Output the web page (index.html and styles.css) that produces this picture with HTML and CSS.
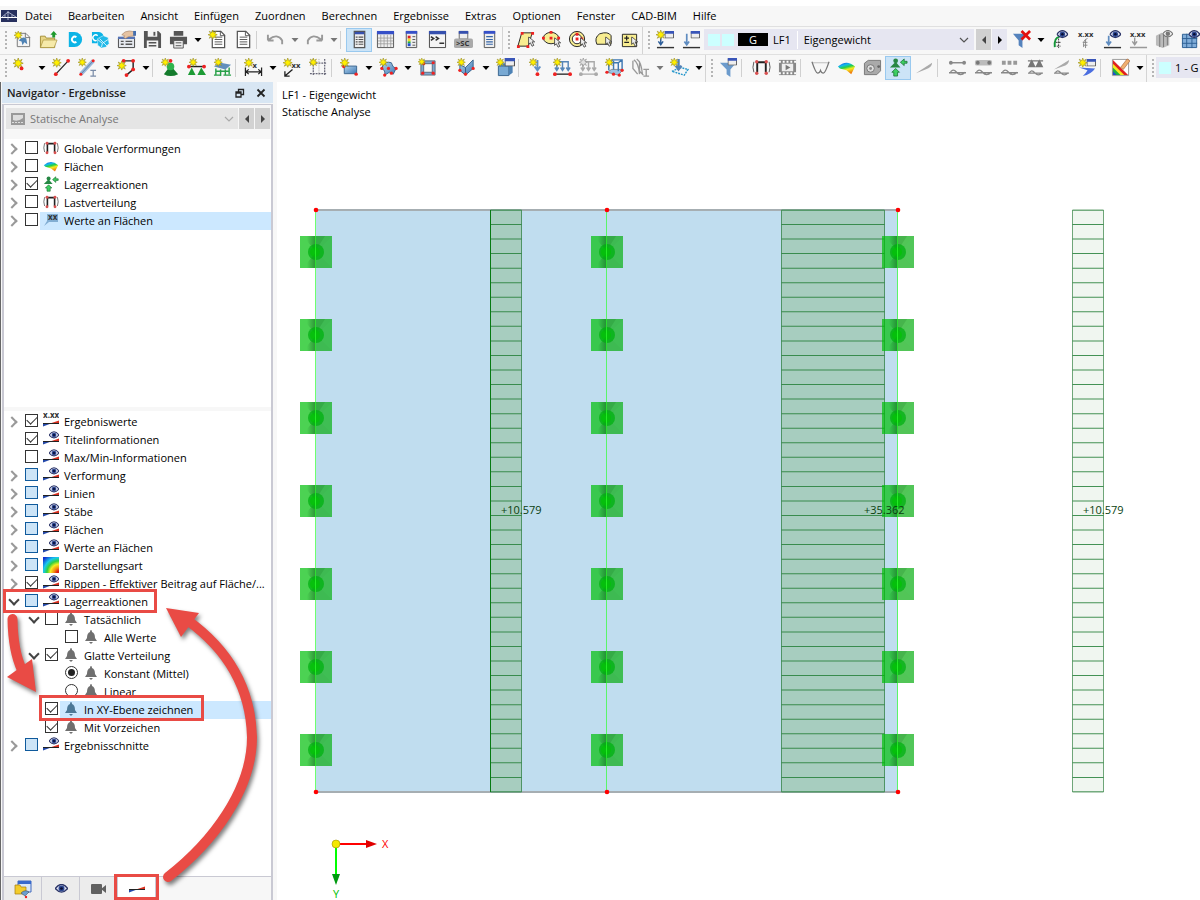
FILE: index.html
```html
<!DOCTYPE html>
<html lang="de">
<head>
<meta charset="utf-8">
<title>Navigator - Ergebnisse</title>
<link rel="stylesheet" href="styles.css">
</head>
<body>
<svg class="defs" aria-hidden="true">
<defs>
<linearGradient id="rain" x1="0" y1="0" x2="0.4" y2="1"><stop offset="0" stop-color="#1538d8"/><stop offset=".3" stop-color="#12b8ee"/><stop offset=".5" stop-color="#25cf45"/><stop offset=".7" stop-color="#f4ec20"/><stop offset="1" stop-color="#f08010"/></linearGradient>
<linearGradient id="blue" x1="0" y1="0" x2="1" y2="1"><stop offset="0" stop-color="#b5d4ec"/><stop offset="1" stop-color="#3c78b4"/></linearGradient>
<linearGradient id="shadeL" x1="0" y1="0" x2="1" y2="0"><stop offset=".3" stop-color="#044010" stop-opacity="0"/><stop offset="1" stop-color="#044010" stop-opacity=".45"/></linearGradient>
<radialGradient id="contour" cx="1" cy="1" r="1.3"><stop offset=".1" stop-color="#e02010"/><stop offset=".25" stop-color="#f49010"/><stop offset=".42" stop-color="#f4ee20"/><stop offset=".58" stop-color="#30d040"/><stop offset=".75" stop-color="#18c8f0"/><stop offset="1" stop-color="#1030d0"/></radialGradient>
<symbol id="star" viewBox="0 0 10 10"><path d="M5 0l1 2.8L8.700 1.300 7.200 4 10 5 7.200 6l1.500 2.700L6 7.200 5 10 4 7.200 1.300 8.700 2.800 6 0 5l2.800-1L1.300 1.300 4 2.800z" fill="#ffef00" stroke="#8f8420" stroke-width=".6"/></symbol>
<symbol id="eye" viewBox="0 0 14 10"><path d="M0 5Q7-4 14 5 7 13 0 5z" fill="#dfe3f3" stroke="#2c3568" stroke-width="1.500"/><circle cx="7" cy="5" r="3.300" fill="#2c4690"/><circle cx="7" cy="5" r="1.500" fill="#080c30"/></symbol>
<symbol id="geye" viewBox="0 0 14 10"><path d="M0 5Q7-4 14 5 7 13 0 5z" fill="#eee" stroke="#777" stroke-width="1.500"/><circle cx="7" cy="5" r="3" fill="#777"/></symbol>
<symbol id="win" viewBox="0 0 10 8"><path d="M.5.5h9v7h-9z" fill="#eee" stroke="#555"/><path d="M0 0h10v3H0z" fill="#3955b8"/></symbol>
<symbol id="cursor" viewBox="0 0 8 12"><path d="M1 0v9l2-2 2 4 2-1-2-4h3z" fill="#eee" stroke="#333" stroke-width=".9"/></symbol>
<symbol id="wave" viewBox="0 0 18 8"><path d="M1 5q3-6 7-1t9 0M0 4.500h18" fill="none" stroke="#888" stroke-width="1.400"/></symbol>
<symbol id="wedges" viewBox="0 0 16 6"><path d="M0 3h8L0 6z" fill="#2348a8"/><path d="M7 3L16 0v3z" fill="#d83020"/><path d="M0 3h16" stroke="#222"/></symbol>

<symbol id="new" viewBox="0 0 20 20"><path d="M4.500 3.500h9l4 4v10h-13z" fill="#f4f4f4" stroke="#777"/><path d="M13 3v5h5" fill="none" stroke="#777"/><path d="M6 11q4-5 8-2l1 6-3-2-2 3-1-4z" fill="#4f83b5"/><use href="#star" x="1" y="1" width="9" height="9"/></symbol>
<symbol id="open" viewBox="0 0 20 20"><path d="M1.500 18.500v-12h5l1 2h9v10z" fill="#e8d585" stroke="#a48f38"/><path d="M1.500 18.500l3-8H19l-3 8z" fill="#f6eaa9" stroke="#a48f38" stroke-width=".7"/><path d="M14 8V5h-2l3.500-4L19 5h-2v3z" fill="#1d9a2c"/></symbol>
<symbol id="dcube" viewBox="0 0 20 20"><path d="M4 2h6a8 8 0 010 16H4z" fill="#0cb4e6"/><path d="M12 7.500a3 3 0 100 5" fill="none" stroke="#fff" stroke-width="2"/></symbol>
<symbol id="dnet" viewBox="0 0 20 20"><path d="M1 2h7a6 6 0 014 10l-4 2H1z" fill="#0cb4e6"/><path d="M13 6l5 2 1 6-3 4-5 1-4-3V9z" fill="#20b9e8" stroke="#fff" stroke-width=".5"/><path d="M7 10l5 4 6-4M12 14l-1 4M9 9l8 8" stroke="#fff" fill="none" stroke-width=".8"/><path d="M7 6a3 3 0 10-1 5" fill="none" stroke="#fff" stroke-width="1.500"/></symbol>
<symbol id="props" viewBox="0 0 20 20"><path d="M1.500 8.500h17v10h-17z" fill="#e5e8ee" stroke="#444"/><path d="M1 7h18v2.500H1z" fill="#5674b5"/><path d="M4 12h3M4 15h3M9 12h7M9 15h7" stroke="#555" stroke-width="1.500"/><path d="M5 5q3-4 8-4l6 1v4l-7 1-3 2-2-1 1-2z" fill="#e6c3a2" stroke="#9b7a60" stroke-width=".6"/><path d="M17 1h3v5h-3z" fill="#446eae"/></symbol>
<symbol id="save" viewBox="0 0 20 20"><path d="M1 1h15l3 3v15H1z" fill="#555"/><path d="M5 1h10v6H5zM4 11h12v8H4z" fill="#f4f4f4"/><path d="M11 2h2v4h-2z" fill="#555"/><path d="M6 13.500h8M6 16.500h8" stroke="#555" stroke-width="1.500"/></symbol>
<symbol id="print" viewBox="0 0 20 20"><path d="M5 1h10v5H5zM1 7h18v8H1z" fill="#555"/><path d="M5 11h10v8H5z" fill="#eee" stroke="#555"/><path d="M7 13.500h6M7 16.500h6" stroke="#555"/></symbol>
<symbol id="doc" viewBox="0 0 20 20"><path d="M3.500 1.500h9l4 4v13h-13z" fill="#fff" stroke="#555" stroke-width="1.300"/><path d="M12 1v5h5" fill="none" stroke="#555"/><path d="M6 7.500h8M6 10h8M6 12.500h8M6 15h8" stroke="#555"/></symbol>
<symbol id="docnew" viewBox="0 0 20 20"><use href="#doc" x="1"/><use href="#star" width="10" height="10"/></symbol>
<symbol id="undo" viewBox="0 0 20 20"><path d="M2 11h6M2 11V5M3 10q9-7 14 1v4" fill="none" stroke="#999" stroke-width="2"/></symbol>
<symbol id="redo" viewBox="0 0 20 20"><path d="M18 11h-6M18 11V5M17 10Q8 3 3 11v4" fill="none" stroke="#999" stroke-width="2"/></symbol>
<symbol id="panel" viewBox="0 0 20 20"><path d="M4.500 1.500h11v17h-11z" fill="#eee" stroke="#555" stroke-width="1.300"/><path d="M5 2h10v2.500H5z" fill="#3650ae"/><path d="M6 7.500h2M6 10h2M6 12.500h2M6 15h2M9 7.500h5M9 10h5M9 12.500h5M9 15h5" stroke="#555" stroke-width="1.300"/></symbol>
<symbol id="tablei" viewBox="0 0 20 20"><path d="M1.500 2.500h17v16h-17z" fill="#eee" stroke="#555"/><path d="M1 1h18v3.500H1z" fill="#3650c8"/><path d="M2 8.500h16M2 11.500h16M2 14.500h16M5 5v13M8.500 5v13M12 5v13M15.500 5v13" stroke="#999" stroke-width=".8"/></symbol>
<symbol id="legend" viewBox="0 0 20 20"><path d="M4.500 1.500h11v17h-11z" fill="#eee" stroke="#555"/><path d="M4 1h12v3H4z" fill="#3650c8"/><path d="M6 6h3v3H6z" fill="#e02020"/><path d="M6 9h3v3H6z" fill="#eedd20"/><path d="M6 12h3v2H6z" fill="#20b040"/><path d="M6 14h3v3H6z" fill="#2050d0"/><path d="M11 7h3M11 10h3M11 13h3M11 16h3" stroke="#555"/></symbol>
<symbol id="console" viewBox="0 0 20 20"><path d="M1.500 1.500h17v17h-17z" fill="#f4f4f4" stroke="#444"/><path d="M1 1h18v3.500H1z" fill="#3650ae"/><path d="M3 7l3 2-3 2M8 7l3 2-3 2M12 14h5" fill="none" stroke="#333" stroke-width="1.600"/></symbol>
<symbol id="script" viewBox="0 0 20 20"><path d="M5.500 1.500h9v8h-9z" fill="#eee" stroke="#666"/><path d="M5 1h10v3H5z" fill="#3650ae"/><rect y="9" width="20" height="10" rx="2" fill="#aaa"/><text x="2" y="17" class="tiny">&gt;SC</text></symbol>
<symbol id="lines" viewBox="0 0 20 20"><path d="M4.500 1.500h11v17h-11z" fill="#eee" stroke="#555"/><path d="M4 1h12v3H4z" fill="#3650c8"/><path d="M6.500 7h7M6.500 10h7M6.500 12.500h7M6.500 15h7" stroke="#3565a8" stroke-width="1.300"/></symbol>
<symbol id="selpara" viewBox="0 0 20 20"><path d="M6 3h11l-4 14H2z" fill="#f8ed91" stroke="#222"/><path d="M5 2h3v3H5zM16 2h3v3h-3zM1 16h3v3H1zM11 16h3v3h-3z" fill="#e22"/><use href="#cursor" x="12" y="7" width="8" height="11"/></symbol>
<symbol id="selell" viewBox="0 0 20 20"><ellipse cx="9.500" cy="8.500" rx="8" ry="6" fill="#f8ed91" stroke="#222"/><path d="M8 1h3v3H8zM0 7h3v3H0zM16 7h3v3h-3zM8 7h3v3H8z" fill="#e22"/><use href="#cursor" x="12" y="8" width="8" height="11"/></symbol>
<symbol id="selring" viewBox="0 0 20 20"><circle cx="9.500" cy="9.500" r="8" fill="#f8ed91" stroke="#222"/><circle cx="9.500" cy="9.500" r="5" fill="#fff" stroke="#222"/><path d="M8 8h3v3H8zM13 8h3v3h-3zM8 3h3v3H8z" fill="#e22"/><use href="#cursor" x="12" y="8" width="8" height="11"/></symbol>
<symbol id="sellas" viewBox="0 0 20 20"><path d="M3 15Q0 8 6 4q9-3 12 2v9z" fill="#f8ed91" stroke="#222"/><use href="#cursor" x="11" y="7" width="8" height="11"/></symbol>
<symbol id="selpm" viewBox="0 0 20 20"><path d="M2.500 4.500h15v13h-15z" fill="#f8ed91" stroke="#222"/><path d="M4.500 8.500h5M7 6v5M4.500 13h5" stroke="#222" stroke-width="1.300"/><use href="#cursor" x="11" y="7" width="8" height="11"/></symbol>
<symbol id="lcnew" viewBox="0 0 20 20"><path d="M1 18.500h18" stroke="#333" stroke-width="1.500"/><path d="M5 7v8M2.500 12L5 15.500 7.500 12" fill="none" stroke="#2b5c98" stroke-width="1.500"/><use href="#star" x="0" y="0" width="10" height="10"/><use href="#win" x="9" y="1" width="10" height="8"/></symbol>
<symbol id="lcedit" viewBox="0 0 20 20"><path d="M1 18.500h18" stroke="#333" stroke-width="1.500"/><path d="M5 4v11M2.500 12L5 15.500 7.500 12" fill="none" stroke="#5f8cc0" stroke-width="1.800"/><use href="#win" x="9" y="1" width="10" height="8"/></symbol>
<symbol id="filterx" viewBox="0 0 20 20"><path d="M1 4h15l-5 7v8l-4-3v-5z" fill="#5583bd"/><path d="M10 1l9 9M19 1l-9 9" stroke="#e30f0f" stroke-width="2.800"/></symbol>
<symbol id="supeye" viewBox="0 0 20 20"><path d="M9 7q-6 1-5 11" fill="none" stroke="#149638" stroke-width="2"/><path d="M8 9v10M5 13h5M6 17h4" stroke="#333" stroke-dasharray="2 1"/><use href="#eye" x="6" y="0" width="12" height="9"/></symbol>
<symbol id="xxx" viewBox="0 0 20 20"><text x="1" y="7" class="tiny">x.xx</text><path d="M11 9q-5 1-4 9M9 10v9M6 13h5M7 16h4" fill="none" stroke="#888"/></symbol>
<symbol id="loadeye" viewBox="0 0 20 20"><path d="M1 18.500h18" stroke="#333" stroke-width="1.500"/><path d="M6 6v9M3.500 12L6 15.500 8.500 12" fill="none" stroke="#5f8cc0" stroke-width="1.800"/><use href="#eye" x="7" y="0" width="12" height="9"/></symbol>
<symbol id="loadxx" viewBox="0 0 20 20"><text x="1" y="7" class="tiny">x.xx</text><path d="M1 18.500h18M6 8v7M3.500 12L6 15.500 8.500 12" fill="none" stroke="#999" stroke-width="1.500"/></symbol>
<symbol id="cubeeye" viewBox="0 0 20 20"><path d="M1 6l6-3 8 3v10l-7 3-7-3z" fill="#bbb"/><path d="M5 5v13M9 5v13M13 6v10" stroke="#777"/><use href="#geye" x="8" y="0" width="11" height="8"/></symbol>
<symbol id="mesheye" viewBox="0 0 20 20"><path d="M1.500 4.500h15v14h-15zM1 9h16M1 14h16M6 4v15M11.500 4v15" fill="#80acd8" stroke="#2c5f94"/><use href="#eye" x="8" y="0" width="12" height="9"/></symbol>

<symbol id="node" viewBox="0 0 20 20"><use href="#star" width="11" height="11"/><circle cx="9" cy="11" r="2" fill="#e22"/></symbol>
<symbol id="line" viewBox="0 0 20 20"><path d="M4 17L17 3" stroke="#222" stroke-width="1.300"/><circle cx="4" cy="17" r="2" fill="#e22"/><circle cx="17" cy="3" r="2" fill="#e22"/><use href="#star" width="10" height="10"/></symbol>
<symbol id="member" viewBox="0 0 20 20"><path d="M3 17L16 3" stroke="#9ab7d9" stroke-width="4"/><path d="M3 17L16 3" stroke="#5f82a9"/><circle cx="3" cy="17" r="1.600" fill="#e22"/><circle cx="16" cy="3" r="1.600" fill="#e22"/><path d="M13 13h6M16 13v6M13 19h6" stroke="#7a8ca8" stroke-width="1.300"/><use href="#star" width="9" height="9"/></symbol>
<symbol id="poly" viewBox="0 0 20 20"><path d="M6 3h11v9l-7 6" fill="none" stroke="#222" stroke-width="1.500"/><circle cx="7" cy="3" r="2" fill="#e22"/><circle cx="17" cy="3" r="2" fill="#e22"/><circle cx="17" cy="12" r="2" fill="#e22"/><circle cx="10" cy="18" r="2" fill="#e22"/><use href="#star" x="0" y="3" width="10" height="10"/></symbol>
<symbol id="support" viewBox="0 0 20 20"><path d="M10 8l8 9q-8 4-15 0z" fill="#147b2c"/><circle cx="10" cy="9" r="4" fill="#2fb34c"/><circle cx="10" cy="3" r="2" fill="#e22"/><use href="#star" width="9" height="9"/></symbol>
<symbol id="linesup" viewBox="0 0 20 20"><path d="M2 9h16" stroke="#222" stroke-width="1.500"/><path d="M5 10l4 8H1zM15 10l5 8h-9z" fill="#1d9b35"/><circle cx="2" cy="9" r="2" fill="#e22"/><circle cx="18" cy="9" r="2" fill="#e22"/><use href="#star" x="2" y="0" width="9" height="9"/></symbol>
<symbol id="surfsup" viewBox="0 0 20 20"><path d="M1 9l7-4 11 2-6 5z" fill="#628fbd"/><path d="M3 11v7M8 12v7M13 12v6M17 10v7M1 18h7M11 18h8M3 14h14" stroke="#28a048" stroke-width="1.500"/><use href="#star" x="1" y="0" width="9" height="9"/></symbol>
<symbol id="dim" viewBox="0 0 20 20"><path d="M1.500 10v9M18.500 10v9M2 14.500h16M5 12l-3 2.500L5 17M15 12l3 2.500-3 2.500" fill="none" stroke="#222" stroke-width="1.300"/><text x="9" y="10" class="tiny">x</text><use href="#star" width="10" height="10"/></symbol>
<symbol id="dimxx" viewBox="0 0 20 20"><path d="M10 12l-8 7M2 14v5h5" fill="none" stroke="#222" stroke-width="1.400"/><text x="9" y="11" class="tiny">xx</text><use href="#star" width="10" height="10"/></symbol>
<symbol id="grid" viewBox="0 0 20 20"><path d="M4.500 1v18M16.500 1v18M1 5.500h18M1 16.500h18" fill="none" stroke="#667" stroke-width="1.300" stroke-dasharray="2 1"/><path d="M10.500 1v18" stroke="#aaa" stroke-dasharray="1 1"/><use href="#star" width="9" height="9"/></symbol>
<symbol id="surf" viewBox="0 0 20 20"><path d="M4.500 8.500h13v8h-13z" fill="url(#blue)" stroke="#39648e"/><circle cx="4" cy="9" r="1.800" fill="#e22"/><circle cx="17" cy="17" r="1.800" fill="#e22"/><use href="#star" width="10" height="10"/></symbol>
<symbol id="surfc" viewBox="0 0 20 20"><path d="M4 8q3-5 9-3 1 5 5 6l-3 6-4-2-5 3q1-5-3-7z" fill="url(#blue)" stroke="#39648e"/><circle cx="3" cy="11" r="1.700" fill="#e22"/><circle cx="10" cy="11" r="1.700" fill="#e22"/><circle cx="18" cy="11" r="1.700" fill="#e22"/><circle cx="6" cy="18" r="1.700" fill="#e22"/><circle cx="13" cy="16" r="1.700" fill="#e22"/><use href="#star" width="9" height="9"/></symbol>
<symbol id="opening" viewBox="0 0 20 20"><path d="M3 3h15v15H3zM6 6v9h9V6z" fill="#7fa9cf" stroke="#456" stroke-width=".8" fill-rule="evenodd"/><circle cx="5" cy="16" r="1.700" fill="#e22"/><circle cx="16" cy="16" r="1.700" fill="#e22"/><circle cx="16" cy="5" r="1.700" fill="#e22"/><circle cx="6" cy="6" r="1.700" fill="#e22"/><use href="#star" width="8" height="8"/></symbol>
<symbol id="fold" viewBox="0 0 20 20"><path d="M3 7l6 3 8-8v9l-8 7-6-5z" fill="url(#blue)" stroke="#39648e"/><path d="M9 10v8" stroke="#315780"/><circle cx="3" cy="13" r="1.700" fill="#e22"/><circle cx="9" cy="17" r="1.700" fill="#e22"/><circle cx="17" cy="11" r="1.700" fill="#e22"/><use href="#star" width="9" height="9"/></symbol>
<symbol id="solid" viewBox="0 0 20 20"><path d="M2.500 8.500h11v10h-11z" fill="#78a9d3" stroke="#39648e"/><path d="M2.500 8.500l4-3h11l-4 3zM13.500 8.500l4-3v10l-4 3z" fill="#4d82b5"/><use href="#star" width="9" height="9"/><use href="#win" x="9" y="0" width="11" height="9"/></symbol>
<symbol id="nload" viewBox="0 0 20 20"><path d="M11 2v11M8 9l3 4 3-4" fill="none" stroke="#6290c3" stroke-width="2"/><circle cx="11" cy="17" r="2" fill="#e22"/><use href="#star" x="2" width="9" height="9"/></symbol>
<symbol id="lload" viewBox="0 0 20 20"><path d="M4 13V4h12v9M10 4v9M2 10l2 3 2-3M8 10l2 3 2-3M14 10l2 3 2-3" fill="none" stroke="#5686b8" stroke-width="1.500"/><path d="M2 17h16" stroke="#333" stroke-width="1.500"/><circle cx="2" cy="17" r="2" fill="#e22"/><circle cx="18" cy="17" r="2" fill="#e22"/><use href="#star" width="9" height="9"/></symbol>
<symbol id="gload" viewBox="0 0 20 20"><path d="M4 13V4h12v9M10 4v9M2 10l2 3 2-3M8 10l2 3 2-3M14 10l2 3 2-3M2 17h16" fill="none" stroke="#aaa" stroke-width="1.500"/><circle cx="2" cy="17" r="2" fill="#aaa"/><circle cx="18" cy="17" r="2" fill="#aaa"/><use href="#star" width="9" height="9" class="grey"/></symbol>
<symbol id="sload" viewBox="0 0 20 20"><path d="M2 15l5-3h12l-5 6z" fill="#9cc3e2" stroke="#555" stroke-width=".6"/><path d="M4 13V5l4-3h10v10M4 5h10v9M14 5l4-3M9 3v9" fill="none" stroke="#3f78b2" stroke-width="1.500"/><circle cx="2" cy="15" r="1.700" fill="#e22"/><circle cx="9" cy="17" r="1.700" fill="#e22"/><circle cx="15" cy="18" r="1.700" fill="#e22"/><circle cx="18" cy="13" r="1.700" fill="#e22"/><use href="#star" width="9" height="9"/></symbol>
<symbol id="wload" viewBox="0 0 20 20"><path d="M3 2q5 3 6 15M6 1q5 3 6 16M2 3v8l5 6M9 4v10l4 4M13 12h6M16 12v7M13 19h6" fill="none" stroke="#999" stroke-width="1.400"/></symbol>
<symbol id="fload" viewBox="0 0 20 20"><path d="M2 14l9-4 8 2-4 6z" fill="none" stroke="#2898cc" stroke-width="1.500" stroke-dasharray="2 1"/><path d="M9 1v10M6 8l3 4 3-4" fill="none" stroke="#5481b5" stroke-width="2.500"/><use href="#star" width="9" height="9"/></symbol>
<symbol id="filterw" viewBox="0 0 20 20"><path d="M1 5h17l-6 7v8l-4-3v-5z" fill="#6c9bcc"/><use href="#win" x="9" y="0" width="10" height="8"/></symbol>
<symbol id="frame" viewBox="0 0 20 20"><path d="M5.500 15V4.500h9V15" fill="none" stroke="#222" stroke-width="2"/><path d="M2 4Q0 10 2 15M18 4q2 6 0 11" fill="none" stroke="#555"/><circle cx="5" cy="4" r="1.800" fill="#d85050"/><circle cx="15" cy="4" r="1.800" fill="#d85050"/><circle cx="5" cy="16" r="1.800" fill="#d85050"/><circle cx="15" cy="16" r="1.800" fill="#d85050"/></symbol>
<symbol id="film" viewBox="0 0 20 20"><path d="M1 2h18v16H1z" fill="#888"/><path d="M1 4h18M1 16h18" stroke="#fff" stroke-width="2" stroke-dasharray="2 2"/><path d="M4 6h12v8H4z" fill="#eee"/><path d="M8 7l5 3-5 3z" fill="#777"/></symbol>
<symbol id="curve" viewBox="0 0 20 20"><path d="M1 5h18" stroke="#bbb"/><path d="M1 4q4 12 6 12t3-3q1 3 3 3t6-12" fill="none" stroke="#777" stroke-width="1.300"/></symbol>
<symbol id="rainbow" viewBox="0 0 20 20"><path d="M1 9q9-8 18 0l-4 8-5-4-7-2z" fill="url(#rain)"/></symbol>
<symbol id="cubeg" viewBox="0 0 20 20"><path d="M1.500 5.500l4-3h13v11l-4 4h-13z" fill="#aaa" stroke="#777"/><circle cx="8" cy="11" r="4" fill="#ddd" stroke="#777"/><circle cx="8" cy="11" r="1.500" fill="#888"/><circle cx="16.500" cy="9" r="1.500" fill="#666"/></symbol>
<symbol id="react" viewBox="0 0 20 20"><circle cx="7" cy="3" r="2.500" fill="#268744"/><path d="M7 4l5 6H1z" fill="#268744"/><path d="M19 5.500h-3V8L12 4.500 16 1v2.500h3zM5 19v-4H3l4-4 4 4H9v4z" fill="#3ccf62" stroke="#18702f" stroke-width=".8"/></symbol>
<symbol id="leaf" viewBox="0 0 20 20"><path d="M1 16L18 5q0 5-7 7z" fill="#aaa"/></symbol>
<symbol id="w1" viewBox="0 0 20 20"><path d="M3 5h14" stroke="#888" stroke-width="1.500"/><circle cx="3" cy="5" r="2" fill="#888"/><circle cx="17" cy="5" r="2" fill="#888"/><use href="#wave" x="1" y="11" width="18" height="8"/></symbol>
<symbol id="w2" viewBox="0 0 20 20"><rect x="1" y="2" width="18" height="6" rx="2" fill="#bbb"/><circle cx="4" cy="5" r="2" fill="#777"/><circle cx="16" cy="5" r="2" fill="#777"/><use href="#wave" x="1" y="11" width="18" height="8"/></symbol>
<symbol id="w3" viewBox="0 0 20 20"><path d="M2 5h16" stroke="#999" stroke-width="4" stroke-dasharray="4 2"/><use href="#wave" x="1" y="11" width="18" height="8"/></symbol>
<symbol id="w4" viewBox="0 0 20 20"><path d="M2 3h16M6 3l-3 6h6zM14 3l-3 6h6z" fill="#777" stroke="#777" stroke-width="1.500"/><use href="#wave" x="1" y="12" width="18" height="7"/></symbol>
<symbol id="w5" viewBox="0 0 20 20"><path d="M2 12L18 2q0 5-7 7z" fill="#aaa"/><use href="#wave" x="1" y="12" width="18" height="7"/></symbol>
<symbol id="reswin" viewBox="0 0 20 20"><path d="M1 10l17 1q-4 6-13 8 4-4 5-6z" fill="#4b6ee0"/><use href="#star" width="10" height="10"/><use href="#win" x="9" y="1" width="10" height="8"/></symbol>
<symbol id="colors" viewBox="0 0 20 20"><path d="M1.500 1.500h17v17h-17z" fill="#fff" stroke="#999"/><path d="M2 2v16h16z" fill="#e02020"/><path d="M2 6v12h12z" fill="#f4ea20"/><path d="M2 10v8h8z" fill="#20b040"/><path d="M2 14v4h4z" fill="#2050d0"/><path d="M10 10l7-9 3 2-7 9z" fill="#f0b070" stroke="#a05a30" stroke-width=".6"/></symbol>

<symbol id="res" viewBox="0 0 16 16"><use href="#wedges" x="0" y="7" width="16" height="7"/><use href="#eye" x="6" y="0" width="10" height="8"/></symbol>
<symbol id="resx" viewBox="0 0 16 16"><text x="0" y="5" class="tiny">x.xx</text><use href="#wedges" x="0" y="7" width="16" height="7"/></symbol>
<symbol id="bell" viewBox="0 0 16 16"><path d="M8 1q1 0 1 2 3 1 3 6l2 3H2l2-3q0-5 3-6 0-2 1-2zM6 13h4l-2 2z" fill="currentColor"/></symbol>
<symbol id="iso" viewBox="0 0 16 16"><path d="M0 0h16v16H0z" fill="url(#contour)"/></symbol>
<symbol id="vals" viewBox="0 0 16 16"><path d="M4 2h11v8H6l-5 4 3-5z" fill="#82aed3"/><text x="5" y="8" class="tiny">xx</text></symbol>
<symbol id="stat" viewBox="0 0 16 16"><path d="M1 2h14v12H1z" fill="#999"/><path d="M3 4h10v3q-5 4-10 2z" fill="#ddd"/><path d="M2 11.500h12" stroke="#ddd" stroke-dasharray="2 1"/></symbol>
<symbol id="tabdata" viewBox="0 0 20 20"><path d="M5 2h13v11H5z" fill="#d9e7f7" stroke="#4169bd"/><path d="M5 2h13v3H5z" fill="#3769cd"/><path d="M2 6h5l1 2h5v7H2z" fill="#f3cc2b" stroke="#a57c10" stroke-width=".7"/><path d="M8 14q4-4 8-1l-4 4z" fill="#6a9ed0" stroke="#345" stroke-width=".5"/><circle cx="13" cy="18" r="1.200" fill="#e22"/></symbol>
<symbol id="camera" viewBox="0 0 20 20"><rect x="2" y="5" width="11" height="10" rx="1" fill="#606060"/><path d="M12 10l5-4v8z" fill="#606060"/></symbol>
<symbol id="next" viewBox="0 0 8 8"><path d="M2 0l4 4-4 4z" fill="currentColor"/></symbol>
<symbol id="prev" viewBox="0 0 8 8"><path d="M6 0L2 4l4 4z" fill="currentColor"/></symbol>
<symbol id="down" viewBox="0 0 8 8"><path d="M0.500 2h7L4 6z" fill="currentColor"/></symbol>
<symbol id="chev" viewBox="0 0 12 12"><path d="M2 4l4 4 4-4" fill="none" stroke="currentColor" stroke-width="1.200"/></symbol>
<symbol id="pad" viewBox="0 0 32 32"><path d="M0 0h16v32H0z" fill="#00bf0a" opacity=".7"/><path d="M16 0h16v32H16z" fill="#00aa08" opacity=".68"/><path d="M3 0h13v16z" fill="url(#shadeL)"/><path d="M3 32h13V16z" fill="url(#shadeL)"/><path d="M16 0h9l-9 14z" fill="#045a10" opacity=".15"/><path d="M32 0v32L16 16z" fill="#50e070" opacity=".1"/><circle cx="16" cy="16" r="8" fill="#00b010" opacity=".75"/><circle cx="15" cy="16" r="5" fill="#00c400" opacity=".6"/></symbol>
</defs>
</svg>

<header class="head">
<nav class="menu">
<svg class="logo" viewBox="0 0 16 12"><path d="M0 0h16v12H0z" fill="#27305e"/><path d="M0 7.500h16" stroke="#fff"/><path d="M1 7l6-5 8 5M7 1v9M4 5v2M11 5v2" fill="none" stroke="#dde3f5" stroke-width=".7"/></svg>
<button>Datei</button><button>Bearbeiten</button><button>Ansicht</button><button>Einfügen</button><button>Zuordnen</button><button>Berechnen</button><button>Ergebnisse</button><button>Extras</button><button>Optionen</button><button>Fenster</button><button>CAD-BIM</button><button>Hilfe</button>
</nav>
<div class="bar">
<div class="group">
<button class="tb" aria-label="Neu"><svg><use href="#new"/></svg></button><button class="tb" aria-label="Öffnen"><svg><use href="#open"/></svg></button><button class="tb" aria-label="Center"><svg><use href="#dcube"/></svg></button><button class="tb" aria-label="Netz"><svg><use href="#dnet"/></svg></button><button class="tb" aria-label="Basisangaben"><svg><use href="#props"/></svg></button><button class="tb" aria-label="Speichern"><svg><use href="#save"/></svg></button><button class="tb" aria-label="Drucken"><svg><use href="#print"/></svg></button><button class="dd" aria-label="Mehr"><svg><use href="#down"/></svg></button><button class="tb" aria-label="Neues Protokoll"><svg><use href="#docnew"/></svg></button><button class="tb" aria-label="Protokoll"><svg><use href="#doc"/></svg></button><i class="sep"></i><button class="tb" aria-label="Rückgängig"><svg><use href="#undo"/></svg></button><button class="dd off" aria-label="Mehr"><svg><use href="#down"/></svg></button><button class="tb" aria-label="Wiederholen"><svg><use href="#redo"/></svg></button><button class="dd off" aria-label="Mehr"><svg><use href="#down"/></svg></button><i class="sep"></i><button class="tb on" aria-label="Navigator"><svg><use href="#panel"/></svg></button><button class="tb" aria-label="Tabellen"><svg><use href="#tablei"/></svg></button><button class="tb" aria-label="Panel"><svg><use href="#legend"/></svg></button><button class="tb" aria-label="Konsole"><svg><use href="#console"/></svg></button><button class="tb" aria-label="Skript"><svg><use href="#script"/></svg></button><button class="tb" aria-label="Liste"><svg><use href="#lines"/></svg></button>
</div>
<div class="group">
<button class="tb" aria-label="Auswahl Parallelogramm"><svg><use href="#selpara"/></svg></button><button class="tb" aria-label="Auswahl Ellipse"><svg><use href="#selell"/></svg></button><button class="tb" aria-label="Auswahl Ring"><svg><use href="#selring"/></svg></button><button class="tb" aria-label="Auswahl Lasso"><svg><use href="#sellas"/></svg></button><button class="tb" aria-label="Auswahl Modus"><svg><use href="#selpm"/></svg></button>
</div>
<div class="group last">
<button class="tb" aria-label="Neuer Lastfall"><svg><use href="#lcnew"/></svg></button><button class="tb" aria-label="Lastfall bearbeiten"><svg><use href="#lcedit"/></svg></button>
<button class="loadcase"><i class="sw"></i><i class="sw"></i><b>G</b><span class="lf">LF1</span><span class="name">Eigengewicht</span><svg><use href="#chev"/></svg></button>
<button class="step grey-step" aria-label="Zurück"><svg><use href="#prev"/></svg></button><button class="step" aria-label="Weiter"><svg><use href="#next"/></svg></button>
<button class="tb" aria-label="Filter"><svg><use href="#filterx"/></svg></button><button class="dd" aria-label="Mehr"><svg><use href="#down"/></svg></button><button class="tb" aria-label="Lager anzeigen"><svg><use href="#supeye"/></svg></button><button class="tb" aria-label="Lagerwerte"><svg><use href="#xxx"/></svg></button><button class="tb" aria-label="Lasten anzeigen"><svg><use href="#loadeye"/></svg></button><button class="tb" aria-label="Lastwerte"><svg><use href="#loadxx"/></svg></button><button class="tb" aria-label="Volumen"><svg><use href="#cubeeye"/></svg></button><button class="tb" aria-label="FE-Netz"><svg><use href="#mesheye"/></svg></button>
</div>
</div>
<div class="bar second">
<div class="group">
<button class="tb" aria-label="Knoten"><svg><use href="#node"/></svg></button><button class="dd" aria-label="Mehr"><svg><use href="#down"/></svg></button><button class="tb" aria-label="Linie"><svg><use href="#line"/></svg></button><button class="tb" aria-label="Stab"><svg><use href="#member"/></svg></button><button class="dd" aria-label="Mehr"><svg><use href="#down"/></svg></button><button class="tb" aria-label="Polylinie"><svg><use href="#poly"/></svg></button><button class="dd" aria-label="Mehr"><svg><use href="#down"/></svg></button><i class="sep"></i><button class="tb" aria-label="Knotenlager"><svg><use href="#support"/></svg></button><button class="tb" aria-label="Linienlager"><svg><use href="#linesup"/></svg></button><button class="tb" aria-label="Flächenlager"><svg><use href="#surfsup"/></svg></button><i class="sep"></i><button class="tb" aria-label="Bemaßung"><svg><use href="#dim"/></svg></button><button class="dd" aria-label="Mehr"><svg><use href="#down"/></svg></button><button class="tb" aria-label="Kommentar"><svg><use href="#dimxx"/></svg></button><button class="tb" aria-label="Raster"><svg><use href="#grid"/></svg></button><i class="sep"></i><button class="tb" aria-label="Fläche"><svg><use href="#surf"/></svg></button><button class="dd" aria-label="Mehr"><svg><use href="#down"/></svg></button><button class="tb" aria-label="Gekrümmte Fläche"><svg><use href="#surfc"/></svg></button><button class="dd" aria-label="Mehr"><svg><use href="#down"/></svg></button><button class="tb" aria-label="Öffnung"><svg><use href="#opening"/></svg></button><button class="dd" aria-label="Mehr"><svg><use href="#down"/></svg></button><button class="tb" aria-label="Faltwerk"><svg><use href="#fold"/></svg></button><button class="dd" aria-label="Mehr"><svg><use href="#down"/></svg></button><button class="tb" aria-label="Volumenkörper"><svg><use href="#solid"/></svg></button><i class="sep"></i><button class="tb" aria-label="Knotenlast"><svg><use href="#nload"/></svg></button><button class="tb" aria-label="Linienlast"><svg><use href="#lload"/></svg></button><button class="tb" aria-label="Stablast"><svg><use href="#gload"/></svg></button><button class="tb" aria-label="Flächenlast"><svg><use href="#sload"/></svg></button><button class="tb" aria-label="Generierte Last"><svg><use href="#wload"/></svg></button><button class="dd off" aria-label="Mehr"><svg><use href="#down"/></svg></button><button class="tb" aria-label="Freie Last"><svg><use href="#fload"/></svg></button><button class="dd" aria-label="Mehr"><svg><use href="#down"/></svg></button>
</div>
<div class="group wide">
<button class="tb" aria-label="Ergebnisfilter"><svg><use href="#filterw"/></svg></button><i class="sep"></i><button class="tb" aria-label="Verformungen"><svg><use href="#frame"/></svg></button><button class="tb" aria-label="Animation"><svg><use href="#film"/></svg></button><i class="sep"></i><button class="tb" aria-label="Verläufe"><svg><use href="#curve"/></svg></button><button class="tb" aria-label="Flächenergebnisse"><svg><use href="#rainbow"/></svg></button><button class="tb" aria-label="Volumenergebnisse"><svg><use href="#cubeg"/></svg></button><button class="tb on" aria-label="Lagerreaktionen"><svg><use href="#react"/></svg></button><button class="tb" aria-label="Schnitt"><svg><use href="#leaf"/></svg></button><i class="sep"></i><button class="tb" aria-label="Diagramm 1"><svg><use href="#w1"/></svg></button><button class="tb" aria-label="Diagramm 2"><svg><use href="#w2"/></svg></button><button class="tb" aria-label="Diagramm 3"><svg><use href="#w3"/></svg></button><button class="tb" aria-label="Diagramm 4"><svg><use href="#w4"/></svg></button><button class="tb" aria-label="Diagramm 5"><svg><use href="#w5"/></svg></button><button class="tb" aria-label="Neuer Schnitt"><svg><use href="#reswin"/></svg></button><i class="sep"></i><button class="tb" aria-label="Farben"><svg><use href="#colors"/></svg></button><button class="dd" aria-label="Mehr"><svg><use href="#down"/></svg></button>
</div>
<div class="group last rest"><button class="loadcase view"><i class="sw"></i><span>1 - G</span></button></div>
</div>
</header>

<div class="body">
<aside class="side">
<div class="title"><h1>Navigator - Ergebnisse</h1>
<button aria-label="Abdocken"><svg viewBox="0 0 10 10"><path d="M1 4h5v5H1zM1 5h5M3.500 3.500V1.500h5v5H6.500" fill="none" stroke="#222" stroke-width="1.300"/></svg></button>
<button aria-label="Schließen"><svg viewBox="0 0 10 10"><path d="M1.500 1.500l7 7M8.500 1.500l-7 7" stroke="#222" stroke-width="1.800"/></svg></button></div>
<div class="pane">
<div class="pick">
<button class="analysis"><svg class="ic"><use href="#stat"/></svg><span>Statische Analyse</span><svg class="ch"><use href="#chev"/></svg></button>
<button class="step" aria-label="Zurück"><svg><use href="#prev"/></svg></button><button class="step" aria-label="Weiter"><svg><use href="#next"/></svg></button>
</div>
<ul class="tree upper">
<li><button class="tw" aria-label="Öffnen"></button><input type="checkbox" id="a1"><label for="a1"><svg><use href="#frame"/></svg>Globale Verformungen</label></li>
<li><button class="tw" aria-label="Öffnen"></button><input type="checkbox" id="a2"><label for="a2"><svg><use href="#rainbow"/></svg>Flächen</label></li>
<li><button class="tw" aria-label="Öffnen"></button><input type="checkbox" id="a3" checked><label for="a3"><svg><use href="#react"/></svg>Lagerreaktionen</label></li>
<li><button class="tw" aria-label="Öffnen"></button><input type="checkbox" id="a4"><label for="a4"><svg><use href="#frame"/></svg>Lastverteilung</label></li>
<li><button class="tw" aria-label="Öffnen"></button><input type="checkbox" id="a5"><label for="a5" class="sel"><svg><use href="#vals"/></svg>Werte an Flächen</label></li>
</ul>
<ul class="tree lower">
<li><button class="tw" aria-label="Öffnen"></button><input type="checkbox" id="b1" checked><label for="b1"><svg><use href="#resx"/></svg>Ergebniswerte</label></li>
<li><i class="tw none"></i><input type="checkbox" id="b2" checked><label for="b2"><svg><use href="#res"/></svg>Titelinformationen</label></li>
<li><i class="tw none"></i><input type="checkbox" id="b3"><label for="b3"><svg><use href="#res"/></svg>Max/Min-Informationen</label></li>
<li><button class="tw" aria-label="Öffnen"></button><input type="checkbox" class="part" id="b4"><label for="b4"><svg><use href="#res"/></svg>Verformung</label></li>
<li><button class="tw" aria-label="Öffnen"></button><input type="checkbox" class="part" id="b5"><label for="b5"><svg><use href="#res"/></svg>Linien</label></li>
<li><button class="tw" aria-label="Öffnen"></button><input type="checkbox" class="part" id="b6"><label for="b6"><svg><use href="#res"/></svg>Stäbe</label></li>
<li><button class="tw" aria-label="Öffnen"></button><input type="checkbox" class="part" id="b7"><label for="b7"><svg><use href="#res"/></svg>Flächen</label></li>
<li><button class="tw" aria-label="Öffnen"></button><input type="checkbox" class="part" id="b8"><label for="b8"><svg><use href="#res"/></svg>Werte an Flächen</label></li>
<li><button class="tw" aria-label="Öffnen"></button><input type="checkbox" class="part" id="b9"><label for="b9"><svg><use href="#iso"/></svg>Darstellungsart</label></li>
<li><button class="tw" aria-label="Öffnen"></button><input type="checkbox" id="b10" checked><label for="b10"><svg><use href="#res"/></svg>Rippen - Effektiver Beitrag auf Fläche/...</label></li>
<li><button class="tw open" aria-label="Schließen"></button><input type="checkbox" class="part" id="b11"><label for="b11"><svg><use href="#res"/></svg>Lagerreaktionen</label></li>
<li class="l1"><button class="tw open" aria-label="Schließen"></button><input type="checkbox" id="b12"><label for="b12"><svg><use href="#bell"/></svg>Tatsächlich</label></li>
<li class="l2"><i class="tw none"></i><input type="checkbox" id="b13"><label for="b13"><svg><use href="#bell"/></svg>Alle Werte</label></li>
<li class="l1"><button class="tw open" aria-label="Schließen"></button><input type="checkbox" id="b14" checked><label for="b14"><svg><use href="#bell"/></svg>Glatte Verteilung</label></li>
<li class="l2"><i class="tw none"></i><input type="radio" name="dist" id="b15" checked><label for="b15"><svg><use href="#bell"/></svg>Konstant (Mittel)</label></li>
<li class="l2"><i class="tw none"></i><input type="radio" name="dist" id="b16"><label for="b16"><svg><use href="#bell"/></svg>Linear</label></li>
<li class="l1"><i class="tw none"></i><input type="checkbox" id="b17" checked><label for="b17" class="sel"><svg><use href="#bell"/></svg>In XY-Ebene zeichnen</label></li>
<li class="l1"><i class="tw none"></i><input type="checkbox" id="b18" checked><label for="b18"><svg><use href="#bell"/></svg>Mit Vorzeichen</label></li>
<li><button class="tw" aria-label="Öffnen"></button><input type="checkbox" class="part" id="b19"><label for="b19"><svg><use href="#res"/></svg>Ergebnisschnitte</label></li>
</ul>
<div class="tabs">
<button aria-label="Daten"><svg><use href="#tabdata"/></svg></button><button aria-label="Zeigen"><svg viewBox="0 0 20 20"><use href="#eye" x="4" y="5" width="13" height="9"/></svg></button><button aria-label="Ansichten"><svg><use href="#camera"/></svg></button><button class="cur" aria-label="Ergebnisse"><svg viewBox="0 0 20 20"><use href="#wedges" x="2" y="7" width="16" height="7"/></svg></button>
</div>
</div>
</aside>
<main class="work">
<div class="info"><p>LF1 - Eigengewicht</p><p>Statische Analyse</p></div>
<svg class="model" viewBox="277 82 923 818" preserveAspectRatio="xMinYMin meet">
<path d="M316 210h582v582H316z" fill="#c0ddef"/>
<path d="M316 210h582M316 792h582" stroke="#a6aeb2" stroke-width="2"/>
<g stroke="#4f9465" fill="#a7cdbf">
<path d="M490.500 210h31v582h-31zM781.500 210h103v582h-103z"/>
<path d="M1072.500 210h31v582h-31z" fill="#f0f6f0" stroke="#6fa679"/>
</g>
<g stroke="#26803a" stroke-opacity=".85" stroke-dasharray="1 13.550" stroke-dashoffset="-14">
<path d="M506 210v582" stroke-width="31"/><path d="M833 210v582" stroke-width="103"/><path d="M1088 210v582" stroke-width="31"/>
</g>
<path d="M490.500 210v582" stroke="#067a12"/>
<g>
<use href="#pad" x="300" y="236" width="32" height="32"/><use href="#pad" x="300" y="319" width="32" height="32"/><use href="#pad" x="300" y="402" width="32" height="32"/><use href="#pad" x="300" y="485" width="32" height="32"/><use href="#pad" x="300" y="568" width="32" height="32"/><use href="#pad" x="300" y="651" width="32" height="32"/><use href="#pad" x="300" y="734" width="32" height="32"/>
<use href="#pad" x="591" y="236" width="32" height="32"/><use href="#pad" x="591" y="319" width="32" height="32"/><use href="#pad" x="591" y="402" width="32" height="32"/><use href="#pad" x="591" y="485" width="32" height="32"/><use href="#pad" x="591" y="568" width="32" height="32"/><use href="#pad" x="591" y="651" width="32" height="32"/><use href="#pad" x="591" y="734" width="32" height="32"/>
<use href="#pad" x="882" y="236" width="32" height="32"/><use href="#pad" x="882" y="319" width="32" height="32"/><use href="#pad" x="882" y="402" width="32" height="32"/><use href="#pad" x="882" y="485" width="32" height="32"/><use href="#pad" x="882" y="568" width="32" height="32"/><use href="#pad" x="882" y="651" width="32" height="32"/><use href="#pad" x="882" y="734" width="32" height="32"/>
</g>
<path d="M315.500 210v582M606.500 210v582M897.500 210v582" stroke="#30ff30" stroke-opacity=".7"/>
<g fill="#f00"><circle cx="316" cy="210" r="2.300"/><circle cx="607" cy="210" r="2.300"/><circle cx="898" cy="210" r="2.300"/><circle cx="316" cy="792" r="2.300"/><circle cx="607" cy="792" r="2.300"/><circle cx="898" cy="792" r="2.300"/></g>
<g class="val"><text x="501" y="514">+10.579</text><text x="864" y="514">+35.362</text><text x="1083" y="514">+10.579</text></g>
<path d="M336 844h32" stroke="#f00" stroke-width="2"/><path d="M366 840l11 4-11 4z" fill="#e00000"/>
<path d="M336 844v32" stroke="#0f0" stroke-width="2"/><path d="M332 874l4 11 4-11z" fill="#009a10"/>
<circle cx="336" cy="844" r="4" fill="#f4e800" stroke="#a09000" stroke-width=".6"/>
<text x="382" y="848" class="ax" fill="#f00">X</text><text x="333" y="898" class="ax" fill="#00c000">Y</text>
</svg>
</main>
</div>
<svg class="notes" viewBox="0 0 280 900" aria-hidden="true">
<g fill="none" stroke="#e94b45" stroke-width="3"><path d="M4.500 590.500h151v21H4.500zM40.500 696.500h162v23H40.500zM115.500 875.500h42v23h-42z"/></g>
<g class="arrows">
<path d="M12.500 619Q13 651 22 670" fill="none" stroke="#e94b45" stroke-width="10" stroke-linecap="round"/><path d="M7 677L32 659l4 33z" fill="#e94b45"/>
<path d="M168 877C213 842 252 790 252 737Q250 665 187 620" fill="none" stroke="#e94b45" stroke-width="10" stroke-linecap="round"/><path d="M166 608l33 5-18 24z" fill="#e94b45"/>
</g>
</svg>
</body>
</html>
```
FILE: styles.css
```css
* { box-sizing: border-box; }
body {
  margin: 0;
  height: 100vh;
  display: flex;
  flex-direction: column;
  position: relative;
  overflow: hidden;
  background: #fff;
  color: #000;
  font: 11px/18px "Open Sans", "Noto Sans", sans-serif;
}
button {
  border: 0;
  padding: 0;
  background: none;
  color: inherit;
  font: inherit;
}
.defs { position: absolute; width: 0; height: 0; }
.tiny { font: 700 8px/1 "Open Sans", sans-serif; fill: #333; }
.grey { filter: grayscale(1); }

.head { padding-top: 6px; flex: none; }
.menu {
  display: flex;
  align-items: center;
  height: 20px;
  background: #f7f7f7;
}
.logo { width: 16px; height: 12px; margin-left: 1px; }
.menu button { padding: 0 8px; white-space: nowrap; }
.bar {
  display: flex;
  height: 28px;
  overflow: hidden;
  background: #f7f7f7;
  border-top: 1px solid #e0e0e0;
}
.group {
  display: flex;
  align-items: center;
  flex: none;
  padding: 0 0 2px 9px;
  border-right: 1px solid #d4d4d4;
  background: repeating-linear-gradient(#b5b5b5 0 2px, transparent 2px 4px) 5px 4px / 2px 19px no-repeat;
}
.group.last { border-right: 0; }
.group.rest { flex: 1; min-width: 0; }
.sep { width: 6px; height: 18px; flex: none; border-left: 1px solid #d0d0d0; }
.second .sep { width: 5px; }
.second .wide .sep { width: 7px; }
.tb {
  width: 26px;
  height: 24px;
  flex: none;
  display: grid;
  place-items: center;
}
.tb svg { width: 19px; height: 19px; }
.tb.on { background: #cce4f7; border: 1px solid #99c9ef; }
.dd { width: 13px; height: 24px; flex: none; display: grid; place-items: center; }
.dd svg { width: 8px; height: 8px; }
.dd.off { color: #777; }
.loadcase {
  display: flex;
  align-items: center;
  gap: 2px;
  width: 270px;
  height: 21px;
  margin-right: 2px;
  padding: 0 4px;
  background: #e6e6f1;
}
.sw { width: 12px; height: 12px; background: #ccffff; flex: none; }
.loadcase b {
  width: 30px;
  height: 13px;
  margin: 0 3px 0 2px;
  line-height: 13px;
  background: #000;
  color: #fff;
  font-weight: 400;
}
.lf { padding-right: 6px; border-right: 1px solid #fff; }
.name { flex: 1; padding-left: 4px; text-align: left; }
.loadcase svg { width: 12px; height: 12px; color: #555; }
.view { flex: 1; width: auto; min-width: 0; margin: 0; padding: 0 0 0 3px; gap: 4px; white-space: nowrap; }
.step { width: 15px; height: 21px; margin-right: 1px; display: grid; place-items: center; background: #e6e6f1; flex: none; }
.step svg { width: 8px; height: 8px; }
.grey-step { background: #d0d0d0; color: #444; }

.body { flex: 1; min-height: 0; display: flex; background: #f7f7f7; }
.side {
  width: 273px;
  flex: none;
  display: flex;
  flex-direction: column;
  margin-right: 4px;
  border-left: 1px solid #666;
}
.title {
  display: flex;
  align-items: center;
  height: 21px;
  margin-left: 1px;
  padding: 0 6px 0 5px;
  background: #d8e6f3;
}
.title h1 { flex: 1; margin: 0; font-size: 11px; font-weight: 600; color: #222; }
.title button { width: 11px; height: 11px; margin-left: 10px; }
.title svg { display: block; width: 10px; height: 10px; }
.pane {
  flex: 1;
  min-height: 0;
  display: flex;
  flex-direction: column;
  margin: 1px 0 0 1px;
  border: 1px solid #c9c9d3;
  border-width: 1px 2px 0 2px;
}
.pick { display: flex; height: 34px; padding: 3px 0 10px 2px; }
.analysis {
  flex: 1;
  display: flex;
  align-items: center;
  gap: 4px;
  margin-right: 1px;
  padding: 0 3px 0 4px;
  background: #e5e5e5;
  color: #777;
  text-align: left;
}
.analysis span { flex: 1; }
.analysis .ic { width: 16px; height: 16px; }
.analysis .ch { width: 12px; height: 12px; color: #aaa; }
.pick .step { background: #d2d2d2; color: #444; }
.tree { list-style: none; margin: 0; padding: 1px 0 0; background: #fff; overflow: hidden; }
.upper { flex: 268 1 0; }
.lower { flex: 465 1 0; margin-top: 4px; padding-top: 2px; }
.tree li { display: flex; align-items: center; height: 18px; }
.tree .l1 { padding-left: 20px; }
.tree .l2 { padding-left: 40px; }
.tw { width: 20px; height: 18px; flex: none; display: grid; place-items: center; }
.tw::after {
  content: "";
  width: 6px;
  height: 6px;
  margin-right: 5px;
  border: solid #999;
  border-width: 2px 2px 0 0;
  transform: rotate(45deg);
}
.tw.open::after { margin: 0 1px 4px 0; border-color: #444; border-width: 0 2px 2px 0; }
.tw.none::after { display: none; }
.tree input {
  appearance: none;
  flex: none;
  width: 13px;
  height: 13px;
  margin: 0 2px 3px 1px;
  border: 1px solid #333;
  background: #fff;
  display: grid;
  place-items: center;
}
.tree input[type="radio"] { border-radius: 50%; }
.tree input.part { background: #cce4f7; border-color: #0f5a9c; }
.tree input[type="checkbox"]:checked::after {
  content: "";
  width: 9px;
  height: 5px;
  margin-bottom: 3px;
  border: solid #333;
  border-width: 0 0 1px 1px;
  transform: rotate(-45deg);
}
.tree input[type="radio"]:checked::after { content: ""; width: 7px; height: 7px; border-radius: 50%; background: #222; }
.tree label {
  flex: 1;
  display: flex;
  align-items: center;
  gap: 5px;
  height: 18px;
  padding-left: 3px;
  white-space: nowrap;
}
.tree label svg { width: 16px; height: 16px; margin-bottom: 2px; color: #6f6f6f; flex: none; }
.tree label.sel { background: #cce8ff; }
.tree label.sel svg { color: #4c7897; }
.tabs { display: flex; flex: none; height: 24px; border-top: 1px solid #c9c9d3; }
.tabs button {
  width: 38px;
  display: grid;
  place-items: center;
  border-right: 1px solid #c9c9d3;
  background: #ececec;
}
.tabs .cur { background: #fff; }
.tabs svg { width: 20px; height: 20px; }

.work { flex: 1; min-width: 0; position: relative; background: #fff; overflow: hidden; }
.info { position: absolute; left: 5px; top: 4px; line-height: 17px; }
.info p { margin: 0; }
.model { display: block; width: 100%; }
.val { font-size: 11px; fill: #0a3f10; }
.ax { font-size: 11px; }
.notes { position: absolute; left: 0; bottom: 0; width: 280px; height: 900px; pointer-events: none; }
.arrows { filter: drop-shadow(2px 3px 2px rgba(0, 0, 0, .5)); }
```
